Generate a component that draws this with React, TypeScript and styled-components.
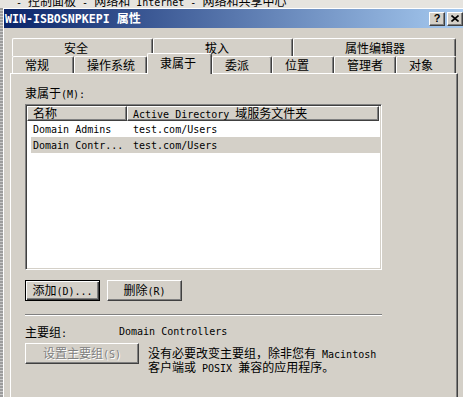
import React from "react";
import styled, { createGlobalStyle } from "styled-components";

const GlobalStyle = createGlobalStyle`
  html, body {
    margin: 0;
    padding: 0;
    background: #d4d0c8;
  }
  body {
    font-family: "Noto Sans CJK SC", sans-serif;
    font-size: 12px;
    color: #000;
  }
`;

const Latin = styled.span`
  font-family: "DejaVu Sans Mono", "Liberation Mono", monospace;
  font-size: 10px;
`;

const Screen = styled.div`
  width: 463px;
  height: 397px;
  overflow: hidden;
  display: flex;
  flex-direction: column;
  background: #d4d0c8;
`;

const BackStrip = styled.div`
  flex: none;
  height: 8px;
  overflow: hidden;
  background: #e6e4df;
  padding-left: 16px;
  display: flex;
  align-items: flex-end;
  line-height: 12px;
  white-space: nowrap;
`;

const BackText = styled.div`
  margin-bottom: -1px;
`;

const Desk = styled.div`
  flex: 1;
  display: flex;
  min-height: 0;
`;

const DeskEdge = styled.div`
  flex: none;
  width: 3px;
  background: repeating-linear-gradient(#9c9c9c 0 2px, #c8c8c8 2px 3px);
`;

const Window = styled.div`
  flex: 1;
  display: flex;
  flex-direction: column;
  border-top: 1px solid #fff;
  border-left: 1px solid #fff;
  min-width: 0;
`;

const TitleBar = styled.div`
  flex: none;
  height: 19px;
  display: flex;
  align-items: center;
  padding-left: 1px;
  background: linear-gradient(to right, #0a246a, #a6caf0);
  color: #fff;
  font-weight: bold;
  white-space: nowrap;
`;

const TitleText = styled.div`
  flex: 1;
  line-height: 14px;
`;

const TitleLatin = styled.span`
  font-family: "DejaVu Sans Mono", monospace;
  font-size: 11.6px;
  font-weight: bold;
`;

const CaptionButton = styled.div<{ $gap?: number }>`
  box-sizing: border-box;
  width: 16px;
  height: 14px;
  margin-right: ${(p) => p.$gap ?? 0}px;
  background: #d4d0c8;
  border: 1px solid;
  border-color: #fff #404040 #404040 #fff;
  box-shadow: inset -1px -1px #808080;
  color: #000;
  display: flex;
  align-items: center;
  justify-content: center;
  font-family: "Liberation Sans", sans-serif;
  font-size: 11px;
  font-weight: bold;
  line-height: 1;
`;

const Body = styled.div`
  flex: 1;
  display: flex;
  flex-direction: column;
  padding: 10px 0 0 6px;
  min-height: 0;
`;

const TabStrip = styled.div`
  width: 444px;
  margin-left: 2px;
  display: flex;
  flex-direction: column;
`;

const TabRow = styled.div`
  display: flex;
`;

const Tab = styled.div<{ $w: number; $h: number; $pad: number; $active?: boolean }>`
  box-sizing: border-box;
  width: ${(p) => p.$w}px;
  height: ${(p) => p.$h}px;
  padding-left: ${(p) => p.$pad}px;
  border-top: 1px solid #fff;
  border-left: 1px solid #fff;
  border-right: 1px solid #404040;
  border-radius: 2px 2px 0 0;
  box-shadow: inset -1px 0 #808080;
  background: #d4d0c8;
  display: flex;
  align-items: center;
  line-height: 14px;
  white-space: nowrap;
  ${(p) =>
    p.$active &&
    `
    position: relative;
    z-index: 2;
    height: ${p.$h + 4}px;
    margin-top: -3px;
    margin-bottom: -1px;
    padding-bottom: 2px;
  `}
`;

const Panel = styled.div`
  flex: 1;
  box-sizing: border-box;
  width: 448px;
  border-top: 1px solid #fff;
  border-left: 1px solid #fff;
  border-right: 1px solid #404040;
  box-shadow: inset -1px 0 #808080;
  padding: 12px 0 0 14px;
  display: flex;
  flex-direction: column;
`;

const FieldLabel = styled.div`
  line-height: 14px;
  white-space: nowrap;
`;

const ListView = styled.div`
  box-sizing: border-box;
  width: 357px;
  height: 166px;
  margin-top: 2px;
  padding: 1px;
  background: #fff;
  border: 1px solid;
  border-color: #808080 #fff #fff #808080;
  box-shadow: inset 1px 1px #404040, inset -1px -1px #d4d0c8;
`;

const HeaderRow = styled.div`
  display: flex;
  height: 15px;
`;

const HeaderCell = styled.div<{ $w: number }>`
  box-sizing: border-box;
  width: ${(p) => p.$w}px;
  height: 15px;
  padding-left: 5px;
  background: #d4d0c8;
  border-top: 1px solid #fff;
  border-left: 1px solid #fff;
  border-right: 1px solid #404040;
  border-bottom: 1px solid #404040;
  box-shadow: inset -1px -1px #808080;
  line-height: 12px;
  white-space: nowrap;
  overflow: hidden;
`;

const ItemRow = styled.div<{ $selected?: boolean }>`
  display: flex;
  height: 16px;
  margin-left: 4px;
  align-items: center;
  background: ${(p) => (p.$selected ? "#d4d0c8" : "transparent")};
  white-space: nowrap;
`;

const ItemCell = styled.div<{ $w?: number }>`
  box-sizing: border-box;
  width: ${(p) => (p.$w ? `${p.$w}px` : "auto")};
  padding-left: 2px;
  line-height: 12px;
`;

const ButtonRow = styled.div<{ $top: number }>`
  display: flex;
  gap: 7px;
  margin-top: ${(p) => p.$top}px;
`;

const Button = styled.button<{ $w: number; $default?: boolean }>`
  box-sizing: border-box;
  width: ${(p) => p.$w}px;
  height: 21px;
  flex: none;
  padding: 0;
  margin: 0;
  font: inherit;
  line-height: 12px;
  color: #000;
  background: #d4d0c8;
  border: 1px solid;
  border-color: #fff #404040 #404040 #fff;
  box-shadow: inset -1px -1px #808080;
  white-space: nowrap;
  ${(p) =>
    p.$default &&
    `
    border-color: #000;
    box-shadow: inset 1px 1px #fff, inset -1px -1px #404040, inset -2px -2px #808080;
  `}
  &:disabled {
    color: #808080;
    text-shadow: 1px 1px #fff;
  }
`;

const Separator = styled.div`
  width: 357px;
  margin-top: 13px;
  border-top: 1px solid #808080;
  border-bottom: 1px solid #fff;
`;

const InfoRow = styled.div`
  display: flex;
  margin-top: 9px;
  line-height: 14px;
  white-space: nowrap;
`;

const InfoKey = styled.div`
  width: 94px;
`;

const GroupRow = styled.div`
  display: flex;
  align-items: flex-start;
  margin-top: 2px;
  gap: 9px;
`;

const Hint = styled.div`
  padding-top: 4px;
  line-height: 12px;
  white-space: nowrap;
`;

const backTabs = [
  { label: "安全", w: 141 },
  { label: "拔入", w: 140 },
  { label: "属性编辑器", w: 163 },
];

const frontTabs = [
  { label: "常规", w: 62 },
  { label: "操作系统", w: 73 },
  { label: "隶属于", w: 65, active: true },
  { label: "委派", w: 60 },
  { label: "位置", w: 62 },
  { label: "管理者", w: 62 },
  { label: "对象", w: 60 },
];

const groups = [
  { name: "Domain Admins", folder: "test.com/Users" },
  { name: "Domain Contr...", folder: "test.com/Users", selected: true },
];

const CloseGlyph = () => (
  <svg width="8" height="7" viewBox="0 0 8 7">
    <path d="M0.5 0.5 L7.5 6.5 M7.5 0.5 L0.5 6.5" stroke="#000" strokeWidth="1.6" fill="none" />
  </svg>
);

export default function App() {
  return (
    <>
      <GlobalStyle />
      <Screen>
        <BackStrip>
          <BackText>
            <Latin>- </Latin>控制面板<Latin> - </Latin>网络和<Latin> Internet - </Latin>网络和共享中心
          </BackText>
        </BackStrip>
        <Desk>
          <DeskEdge />
          <Window>
            <TitleBar>
              <TitleText>
                <TitleLatin>WIN-ISBOSNPKEPI </TitleLatin>属性
              </TitleText>
              <CaptionButton $gap={2}>?</CaptionButton>
              <CaptionButton>
                <CloseGlyph />
              </CaptionButton>
            </TitleBar>
            <Body>
              <TabStrip>
                <TabRow>
                  {backTabs.map((t) => (
                    <Tab key={t.label} $w={t.w} $h={18} $pad={51}>
                      {t.label}
                    </Tab>
                  ))}
                </TabRow>
                <TabRow>
                  {frontTabs.map((t) => (
                    <Tab key={t.label} $w={t.w} $h={17} $pad={12} $active={t.active}>
                      {t.label}
                    </Tab>
                  ))}
                </TabRow>
              </TabStrip>
              <Panel>
                <FieldLabel>
                  隶属于<Latin>(M):</Latin>
                </FieldLabel>
                <ListView>
                  <HeaderRow>
                    <HeaderCell $w={100}>名称</HeaderCell>
                    <HeaderCell $w={252}>
                      <Latin>Active Directory </Latin>域服务文件夹
                    </HeaderCell>
                  </HeaderRow>
                  {groups.map((g) => (
                    <ItemRow key={g.name} $selected={g.selected}>
                      <ItemCell $w={100}>
                        <Latin>{g.name}</Latin>
                      </ItemCell>
                      <ItemCell>
                        <Latin>{g.folder}</Latin>
                      </ItemCell>
                    </ItemRow>
                  ))}
                </ListView>
                <ButtonRow $top={10}>
                  <Button $w={75} $default>
                    添加<Latin>(D)...</Latin>
                  </Button>
                  <Button $w={75}>
                    删除<Latin>(R)</Latin>
                  </Button>
                </ButtonRow>
                <Separator />
                <InfoRow>
                  <InfoKey>
                    主要组<Latin>:</Latin>
                  </InfoKey>
                  <Latin>Domain Controllers</Latin>
                </InfoRow>
                <GroupRow>
                  <Button $w={114} disabled>
                    设置主要组<Latin>(S)</Latin>
                  </Button>
                  <Hint>
                    没有必要改变主要组，除非您有<Latin> Macintosh</Latin>
                    <br />
                    客户端或<Latin> POSIX </Latin>兼容的应用程序。
                  </Hint>
                </GroupRow>
              </Panel>
            </Body>
          </Window>
        </Desk>
      </Screen>
    </>
  );
}
